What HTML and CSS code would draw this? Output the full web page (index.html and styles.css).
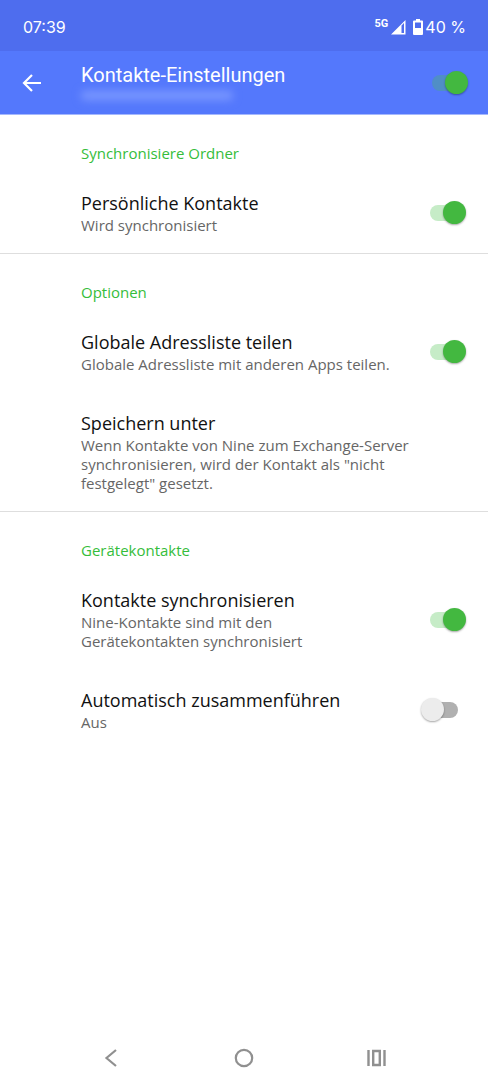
FILE: index.html
```html
<!DOCTYPE html>
<html lang="de">
<head>
<meta charset="utf-8">
<meta name="viewport" content="width=device-width, initial-scale=1">
<title>Kontakte-Einstellungen</title>
<link rel="stylesheet" href="styles.css">
</head>
<body class="screen">
<div class="status-bar">
  <span class="clock">07:39</span>
  <div class="indicators">
    <span class="network">5G</span>
    <svg class="signal" width="15" height="15" viewBox="0 0 15 15" aria-hidden="true"><path fill="#fff" fill-rule="evenodd" d="M14.5 0V14.5H0ZM10.5 5.5V13H13V3Z"/></svg>
    <svg class="battery" width="10" height="16" viewBox="0 0 10 16" aria-hidden="true"><path fill="#fff" fill-rule="evenodd" d="M3 0H7V1.5H9Q10 1.500 10 2.500V15Q10 16 9 16H1Q0 16 0 15V2.500Q0 1.500 1 1.500H3ZM2 3.500V9H8V3.500Z"/></svg>
    <span class="charge">40 %</span>
  </div>
</div>
<header class="app-bar">
  <button class="back" type="button" aria-label="Zurück"><svg width="20" height="20" viewBox="0 0 20 20" aria-hidden="true"><path d="M19 10H2M10 2L2 10L10 18" fill="none" stroke="#fff" stroke-width="2.200"/></svg></button>
  <div class="heading">
    <h1 class="page-title">Kontakte-Einstellungen</h1>
    <div class="hidden-account"></div>
  </div>
  <input class="switch switch-header" type="checkbox" role="switch" aria-label="Kontakte-Einstellungen" checked>
</header>
<main class="settings">
  <section class="group">
    <h2 class="group-title">Synchronisiere Ordner</h2>
    <div class="item">
      <label class="text" for="personal"><span class="title">Persönliche Kontakte</span><span class="summary">Wird synchronisiert</span></label>
      <input class="switch" id="personal" type="checkbox" role="switch" checked>
    </div>
  </section>
  <section class="group">
    <h2 class="group-title">Optionen</h2>
    <div class="item">
      <label class="text" for="global"><span class="title">Globale Adressliste teilen</span><span class="summary">Globale Adressliste mit anderen Apps teilen.</span></label>
      <input class="switch" id="global" type="checkbox" role="switch" checked>
    </div>
    <button class="item item-wide" type="button">
      <span class="text"><span class="title">Speichern unter</span><span class="summary">Wenn Kontakte von Nine zum Exchange-Server synchronisieren, wird der Kontakt als "nicht festgelegt" gesetzt.</span></span>
    </button>
  </section>
  <section class="group">
    <h2 class="group-title">Gerätekontakte</h2>
    <div class="item">
      <label class="text" for="sync"><span class="title">Kontakte synchronisieren</span><span class="summary">Nine-Kontakte sind mit den<br>Gerätekontakten synchronisiert</span></label>
      <input class="switch" id="sync" type="checkbox" role="switch" checked>
    </div>
    <div class="item">
      <label class="text" for="merge"><span class="title">Automatisch zusammenführen</span><span class="summary">Aus</span></label>
      <input class="switch" id="merge" type="checkbox" role="switch">
    </div>
  </section>
</main>
<nav class="nav-bar">
  <button class="nav-button" type="button" aria-label="Zurück"><svg width="20" height="20" viewBox="0 0 20 20" aria-hidden="true"><path d="M15 2L5.500 10L15 18" fill="none" stroke="#909090" stroke-width="2.200"/></svg></button>
  <button class="nav-button" type="button" aria-label="Startseite"><svg width="20" height="20" viewBox="0 0 20 20" aria-hidden="true"><circle cx="10" cy="10" r="8.200" fill="none" stroke="#909090" stroke-width="2.200"/></svg></button>
  <button class="nav-button" type="button" aria-label="Übersicht"><svg width="20" height="20" viewBox="0 0 20 20" aria-hidden="true"><path d="M1.500 2V18M17.500 2V18M6.200 3H12.800V17H6.200Z" fill="none" stroke="#909090" stroke-width="2.400"/></svg></button>
</nav>
</body>
</html>
```

FILE: styles.css
```css
* {
  box-sizing: border-box;
}

.screen {
  display: flex;
  flex-direction: column;
  min-height: 100vh;
  margin: 0;
  background: #fff;
  color: #111;
  font-family: "Open Sans", "Noto Sans", sans-serif;
}

button {
  padding: 0;
  border: 0;
  background: none;
  color: inherit;
  font: inherit;
  text-align: left;
}

svg {
  display: block;
}

.status-bar {
  display: flex;
  align-items: center;
  justify-content: space-between;
  padding: 17px 22px 14px 23px;
  background: #4e6dee;
  color: #fff;
  font-family: "Inter", sans-serif;
  font-size: 16px;
  line-height: 20px;
}

.indicators {
  display: flex;
  align-items: center;
}

.network {
  align-self: flex-start;
  margin-right: 3px;
  font-family: Roboto, sans-serif;
  font-size: 11px;
  font-weight: 700;
  line-height: 14px;
}

.signal {
  margin-right: 7px;
}

.charge {
  margin-left: 2px;
}

.app-bar {
  display: flex;
  align-items: center;
  height: 64px;
  padding: 0 19px 0 22px;
  border-bottom: 1px solid #a5b8fc;
  background: #5478fc;
}

.heading {
  flex: 1;
  margin-left: 39px;
}

.page-title {
  margin: 0;
  color: #fff;
  font-family: Roboto, sans-serif;
  font-size: 20px;
  font-weight: 400;
  line-height: 24px;
}

.hidden-account {
  width: 152px;
  height: 9px;
  margin: 4px 0 3px;
  border-radius: 4px;
  background: #7b98ff;
  filter: blur(4px);
}

.group + .group {
  border-top: 1px solid #dedede;
}

.group-title {
  margin: 0;
  padding: 29px 24px 9px 81px;
  color: #35bd3b;
  font-size: 15px;
  font-weight: 400;
  line-height: 19px;
}

.item {
  display: flex;
  align-items: center;
  gap: 16px;
  width: 100%;
  padding: 19px 21px 18px 81px;
}

.item-wide {
  padding-right: 56px;
}

.text {
  flex: 1;
}

.title,
.summary {
  display: block;
}

.title {
  font-size: 18px;
  line-height: 24px;
}

.summary {
  margin-top: 1px;
  color: #666;
  font-size: 15px;
  line-height: 19px;
}

.switch {
  position: relative;
  flex: none;
  width: 46px;
  height: 24px;
  margin: 0;
  appearance: none;
}

.switch::before,
.switch::after {
  position: absolute;
  content: "";
}

.switch::before {
  inset: 4px 9px;
  border-radius: 8px;
  background: #b0b0b0;
}

.switch::after {
  top: 0;
  left: 0;
  width: 23px;
  height: 23px;
  border-radius: 50%;
  background: #ececec;
  box-shadow: 0 1px 2px rgba(0, 0, 0, 0.35);
}

.switch:checked::before {
  background: #c6ecc7;
}

.switch:checked::after {
  left: 22px;
  background: #43b840;
}

.switch-header:checked::before {
  background: #508ec6;
}

.nav-bar {
  display: flex;
  margin-top: auto;
  padding: 17px 45px;
}

.nav-button {
  display: flex;
  flex: 1;
  justify-content: center;
}
```
